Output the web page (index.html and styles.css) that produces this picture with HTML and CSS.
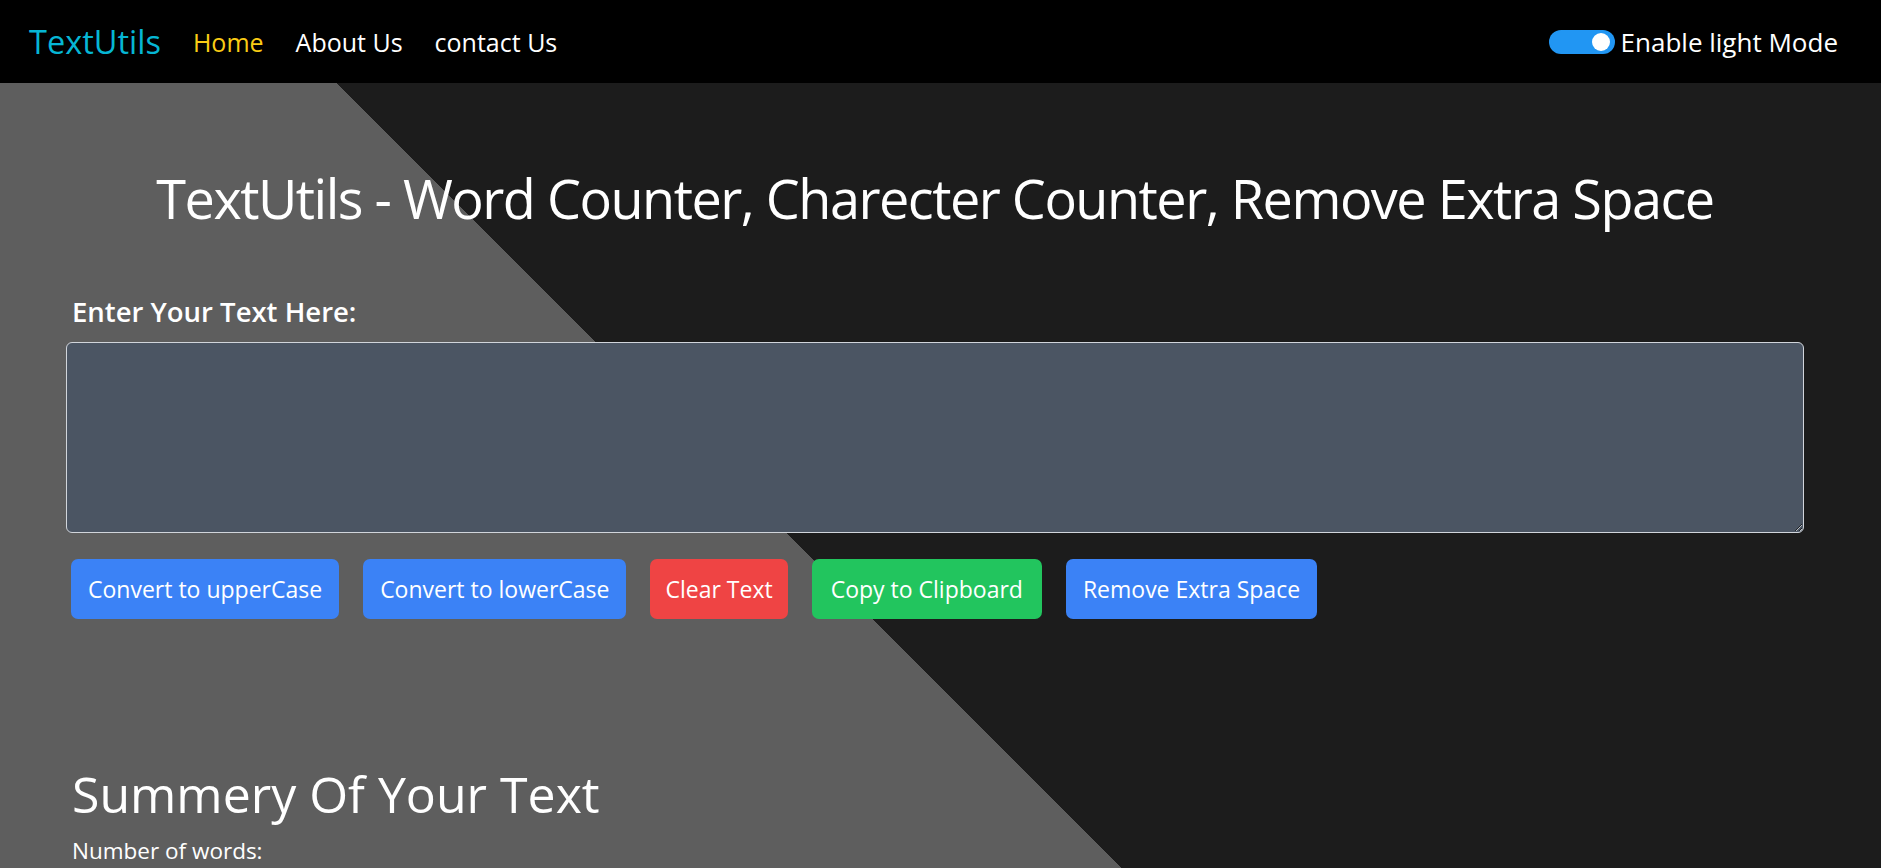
FILE: index.html
```html
<!DOCTYPE html>
<html lang="en">
<head>
<meta charset="utf-8">
<title>TextUtils</title>
<link rel="stylesheet" href="styles.css">
</head>
<body>
<nav class="navbar">
  <div class="nav-left">
    <a class="brand" href="#">TextUtils</a>
    <a class="nav-link active" href="#">Home</a>
    <a class="nav-link" href="#">About Us</a>
    <a class="nav-link" href="#">contact Us</a>
  </div>
  <label class="mode">
    <span class="switch"><span class="knob"></span></span>
    <span class="mode-text">Enable light Mode</span>
  </label>
</nav>
<main class="main">
  <div class="container">
    <h1 class="title">TextUtils - Word Counter, Charecter Counter, Remove Extra Space</h1>
    <label class="field-label" for="text">Enter Your Text Here:</label>
    <textarea id="text" class="textbox"></textarea>
    <div class="actions">
      <button class="btn btn-blue">Convert to upperCase</button>
      <button class="btn btn-blue">Convert to lowerCase</button>
      <button class="btn btn-red">Clear Text</button>
      <button class="btn btn-green">Copy to Clipboard</button>
      <button class="btn btn-blue">Remove Extra Space</button>
    </div>
    <section class="summary">
      <h2 class="summary-title">Summery Of Your Text</h2>
      <p class="stat">Number of words:</p>
    </section>
  </div>
</main>
</body>
</html>
```
FILE: styles.css
```css
* { box-sizing: border-box; }
html, body { margin: 0; padding: 0; }
body {
  font-family: "Open Sans", "Noto Sans", sans-serif;
  color: #fff;
  background: #1c1c1c;
}
a { text-decoration: none; }

.navbar {
  height: 83px;
  background: #000;
  display: flex;
  align-items: center;
  justify-content: space-between;
  padding: 0 43px 0 29px;
}
.nav-left { display: flex; align-items: center; gap: 32px; }
.brand { color: #06b6d4; font-size: 32.5px; }
.nav-link { color: #fff; font-size: 25px; }
.nav-link.active { color: #facc15; }

.mode { display: flex; align-items: center; gap: 6px; }
.switch {
  width: 66px; height: 24px; border-radius: 12px;
  background: #2196f3;
  display: flex; align-items: center; justify-content: flex-end;
  padding-right: 5px;
}
.knob { width: 18px; height: 18px; border-radius: 50%; background: #fff; }
.mode-text { font-size: 26px; color: #fff; }

.main {
  height: 785px;
  overflow: hidden;
  background-color: #5e5e5e;
  background-image: linear-gradient(45deg, #5e5e5e 50%, #1c1c1c 50%);
  background-size: 4000px 4000px;
  background-position: -1664px -2000px;
  background-repeat: no-repeat;
}
.container { margin: 0 77px 0 66px; padding-top: 80px; }
.title {
  margin: 0;
  text-align: center;
  font-size: 54px;
  letter-spacing: -1.5px;
  font-weight: 400;
  line-height: 70px;
  white-space: nowrap;
}
.field-label {
  display: block;
  margin: 60px 0 12px 6px;
  font-size: 27.5px;
  font-weight: 600;
}
.textbox {
  display: block;
  width: 100%;
  height: 191px;
  background: #4b5563;
  border: 1px solid #d1d5db;
  border-radius: 6px;
  color: #fff;
  font-family: inherit;
  font-size: 20px;
  padding: 10px;
}
.actions { display: flex; gap: 24px; margin: 26px 0 0 5px; }
.btn {
  height: 60px;
  padding: 0 17px;
  border: 0;
  border-radius: 7px;
  color: #fff;
  font-family: inherit;
  font-size: 23px;
}
.btn-red { padding: 0 15px; }
.btn-green { padding: 0 19px; }
.btn-blue { background: #3b82f6; }
.btn-red { background: #ef4444; }
.btn-green { background: #22c55e; }

.summary { margin: 145px 0 0 6px; }
.summary-title { margin: 0; font-size: 50px; font-weight: 400; line-height: 60px; }
.stat { margin: 12px 0 0; font-size: 22.5px; line-height: 30px; }
```
